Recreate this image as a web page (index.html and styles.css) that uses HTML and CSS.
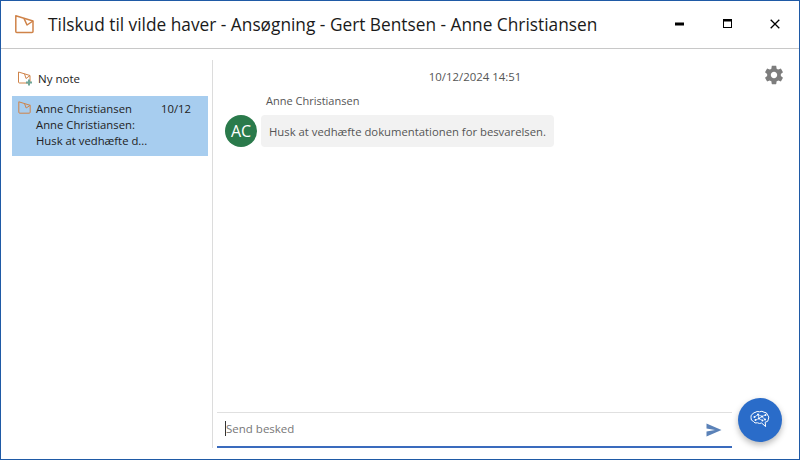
FILE: index.html
```html
<!DOCTYPE html>
<html lang="da">
<head>
<meta charset="utf-8">
<title>Tilskud til vilde haver</title>
<link rel="stylesheet" href="styles.css">
</head>
<body>
<div class="window">
  <header class="titlebar">
    <svg class="title-icon" width="20" height="20" viewBox="0 0 20 20" fill="none" stroke="#cf8349" stroke-width="1.5" stroke-linejoin="round"><path d="M1.8 1.8 L19 7 V17.5 Q19 18.5 18 18.5 H2.8 Q1.8 18.5 1.8 17.5 Z"/><path d="M10 4.4 L13 11 L19 7"/></svg>
    <h1 class="title">Tilskud til vilde haver - Ansøgning - Gert Bentsen - Anne Christiansen</h1>
    <div class="controls">
      <button class="ctl"><svg width="10" height="4" viewBox="0 0 10 4"><rect width="9" height="3" y="0.5" fill="#000"/></svg></button>
      <button class="ctl"><svg width="10" height="10" viewBox="0 0 10 10" fill="none"><rect x="0.5" y="0.5" width="8" height="8" stroke="#000"/><rect x="0" y="0" width="9" height="2.5" fill="#000"/></svg></button>
      <button class="ctl"><svg width="10" height="10" viewBox="0 0 10 10" fill="none" stroke="#000" stroke-width="1.3"><path d="M0.7 0.7 L9.3 9.3 M9.3 0.7 L0.7 9.3"/></svg></button>
    </div>
  </header>
  <div class="body">
    <aside class="sidebar">
      <div class="new-note">
        <svg width="16" height="16" viewBox="0 0 16 16" fill="none"><g stroke="#cf8349" stroke-width="1" stroke-linejoin="round"><path d="M1.5 2 L13 5.5 V12 Q13 13 12 13 H2.5 Q1.5 13 1.5 12 Z"/><path d="M7.5 3.8 L9 8.5 L13 5.5"/></g><path d="M12 9.5 V15.5 M9 12.5 H15" stroke="#6fa597" stroke-width="2"/></svg>
        <span>Ny note</span>
      </div>
      <div class="note">
        <svg class="note-icon" width="13" height="13" viewBox="0 0 13 13" fill="none" stroke="#cf8349" stroke-width="1" stroke-linejoin="round"><path d="M0.8 0.8 L12.2 4.3 V11.2 Q12.2 12.2 11.2 12.2 H1.8 Q0.8 12.2 0.8 11.2 Z"/><path d="M6.5 2.6 L8.2 7 L12.2 4.3"/></svg>
        <div class="note-text">
          <div class="note-head"><span>Anne Christiansen</span><span>10/12</span></div>
          <div>Anne Christiansen:</div>
          <div>Husk at vedhæfte d...</div>
        </div>
      </div>
    </aside>
    <main class="chat">
      <div class="messages">
        <div class="stamp">10/12/2024 14:51</div>
        <svg class="gear" width="22" height="22" viewBox="0 0 24 24"><path fill="#7d7d7d" d="M19.43 12.98c.04-.32.07-.64.07-.98s-.03-.66-.07-.98l2.11-1.65c.19-.15.24-.42.12-.64l-2-3.46c-.12-.22-.39-.3-.61-.22l-2.49 1c-.52-.4-1.08-.73-1.69-.98l-.38-2.65C14.46 2.18 14.25 2 14 2h-4c-.25 0-.46.18-.49.42l-.38 2.65c-.61.25-1.17.59-1.69.98l-2.49-1c-.23-.09-.49 0-.61.22l-2 3.46c-.13.22-.07.49.12.64l2.11 1.65c-.04.32-.07.65-.07.98s.03.66.07.98l-2.11 1.65c-.19.15-.24.42-.12.64l2 3.46c.12.22.39.3.61.22l2.49-1c.52.4 1.08.73 1.69.98l.38 2.65c.03.24.24.42.49.42h4c.25 0 .46-.18.49-.42l.38-2.65c.61-.25 1.17-.59 1.69-.98l2.49 1c.23.09.49 0 .61-.22l2-3.46c.12-.22.07-.49-.12-.64l-2.11-1.65zM12 15.5c-1.93 0-3.5-1.57-3.5-3.5s1.57-3.5 3.5-3.5 3.5 1.57 3.5 3.5-1.57 3.5-3.5 3.5z"/></svg>
        <div class="sender">Anne Christiansen</div>
        <div class="msg-row">
          <div class="avatar">AC</div>
          <div class="bubble">Husk at vedhæfte dokumentationen for besvarelsen.</div>
        </div>
      </div>
      <div class="composer">
        <div class="input-wrap">
          <span class="caret"></span><span class="placeholder">Send besked</span>
          <svg class="send" width="16" height="14" viewBox="0 0 16 14"><path fill="#5b82b8" d="M0.5 0.5 L15.5 7 L0.5 13.5 V8.5 L9 7 L0.5 5.5 Z"/></svg>
        </div>
      </div>
    </main>
  </div>
  <button class="fab">
    <svg width="20" height="20" viewBox="0 0 20 20" fill="none" stroke="#fff" stroke-width="1" stroke-linejoin="round">
      <path d="M5 2.5 Q7 0.8 9.5 1.8 Q12 0.6 14 2.2 Q17 2.2 17.6 5 Q19.6 6.8 18.4 9.2 Q18.4 12 15.2 12.2 L15.6 16.6 L11.6 13 Q9.4 14 7.4 12.8 Q4.6 13.8 3.4 11.4 Q0.6 10.6 1 7.6 Q0.4 4.8 2.8 4 Q3.4 2.4 5 2.5 Z"/>
      <path d="M4.5 7 L8 4.5 L12 6.5 L15.5 5 M5.5 10 L9 8.5 L12 6.5 L15 9.5 M8 4.5 L9 8.5 M9 8.5 L12.5 10.5" stroke-width="0.7"/>
      <g fill="#fff" stroke="none"><circle cx="4.5" cy="7" r="1"/><circle cx="8" cy="4.5" r="1"/><circle cx="12" cy="6.5" r="1"/><circle cx="15.5" cy="5" r="1"/><circle cx="5.5" cy="10" r="1"/><circle cx="9" cy="8.5" r="1"/><circle cx="15" cy="9.5" r="1"/><circle cx="12.5" cy="10.5" r="1"/></g>
    </svg>
  </button>
</div>
</body>
</html>
```
FILE: styles.css
```css
* { box-sizing: border-box; }
html, body { margin: 0; padding: 0; }
body { width: 800px; height: 460px; background: #fff; font-family: "Open Sans", "Noto Sans", sans-serif; overflow: hidden; }
.window { position: relative; width: 800px; height: 460px; border: 1px solid #1f5aa6; display: flex; flex-direction: column; background: #fff; }
.titlebar { height: 48px; flex: none; display: flex; align-items: center; border-bottom: 1px solid #c8c8c8; padding-left: 13px; }
.title-icon { flex: none; margin-right: 14px; margin-top: -1px; }
.title { margin: 0; flex: 1; font-size: 17.3px; font-weight: 400; color: #1a1a1a; white-space: nowrap; }
.controls { display: flex; align-items: center; margin-right: 0; margin-top: -1px; }
.ctl { width: 47.5px; height: 24px; padding: 0; border: 0; background: none; display: flex; align-items: center; justify-content: center; }
.body { flex: 1; display: flex; min-height: 0; padding-top: 11px; }
.sidebar { width: 212px; flex: none; padding: 0 3px 0 11px; border-right: 1px solid #dcdcdc; margin-bottom: 11px; }
.new-note { height: 36px; display: flex; align-items: center; gap: 5px; padding-left: 5px; font-size: 11.5px; color: #222; }
.note { width: 196px; height: 60px; background: #a7cdef; display: flex; padding: 5px 0 0 6px; gap: 5px; font-size: 11.3px; line-height: 16px; color: #222; }
.note-icon { flex: none; }
.note-text { flex: 1; padding-right: 17px; }
.note-head { display: flex; justify-content: space-between; }
.chat { flex: 1; min-width: 0; display: flex; flex-direction: column; }
.messages { flex: 1; position: relative; padding: 9px 0 0 12px; }
.stamp { text-align: center; font-size: 11.4px; line-height: 16px; color: #555; margin-right: 74px; }
.gear { position: absolute; right: 14px; top: 4px; }
.sender { font-size: 11px; line-height: 16px; color: #555; margin: 8px 0 0 41px; }
.msg-row { display: flex; align-items: center; gap: 4px; margin-top: 6px; }
.avatar { width: 32px; height: 32px; border-radius: 50%; background: #2a7a4b; color: #fff; font-size: 16px; display: flex; align-items: center; justify-content: center; }
.bubble { height: 32px; padding: 0 8px; background: #f2f2f2; border-radius: 4px; font-size: 11.3px; color: #555; display: flex; align-items: center; }
.composer { height: 36px; flex: none; margin: 0 67px 11px 4px; border-top: 1px solid #e0e0e0; border-bottom: 2px solid #3a6bbd; }
.input-wrap { height: 100%; display: flex; align-items: center; padding: 0 10px 2px 8px; font-size: 11.5px; color: #777; }
.caret { width: 1px; height: 15px; background: #333; flex: none; }
.placeholder { flex: 1; }
.send { flex: none; margin-top: 2px; }
.fab { position: absolute; left: 736.5px; top: 397px; width: 44px; height: 44px; border-radius: 50%; border: 0; padding: 0; background: #2a6cc9; box-shadow: 0 3px 6px rgba(0,0,0,.28); display: flex; align-items: center; justify-content: center; }
```
